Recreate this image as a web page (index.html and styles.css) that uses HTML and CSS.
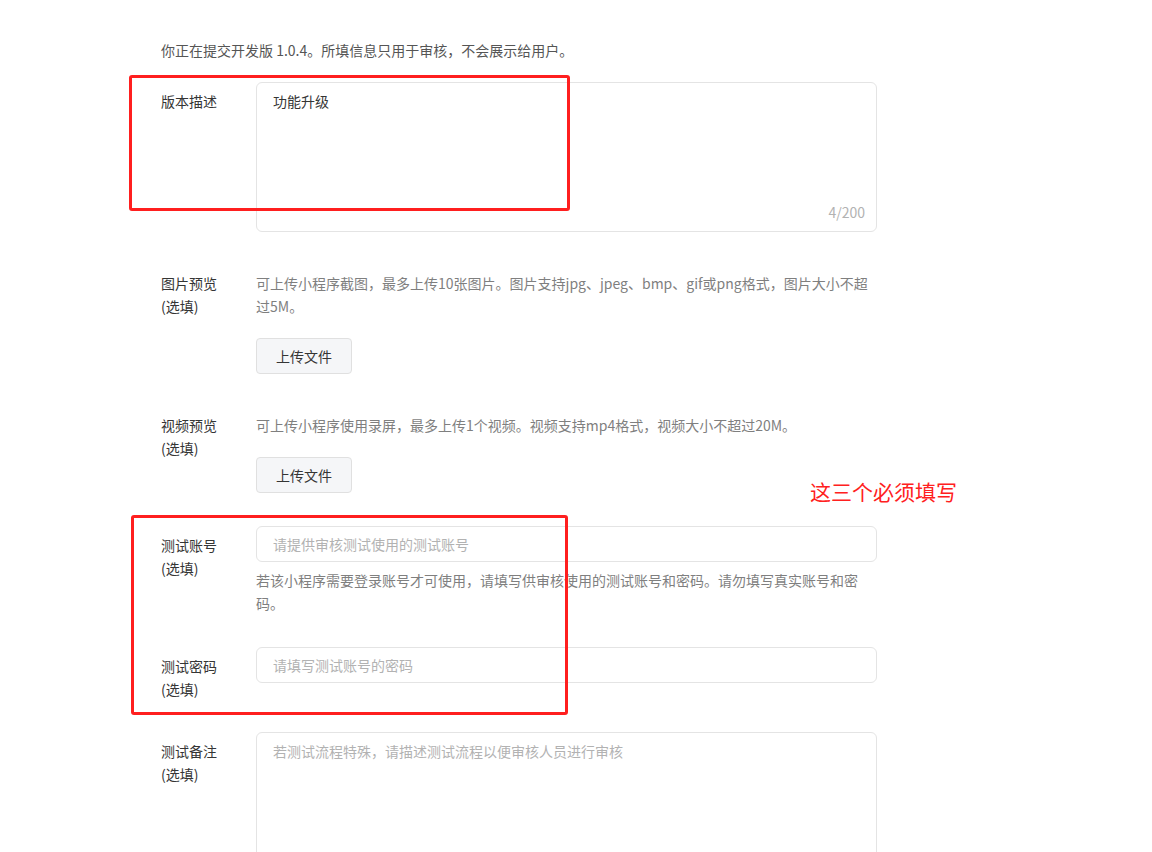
FILE: index.html
```html
<!DOCTYPE html>
<html lang="zh-CN">
<head>
    <meta charset="UTF-8">
    <meta name="viewport" content="width=device-width, initial-scale=1.0">
    <title>提交审核</title>
    <link rel="stylesheet" href="styles.css">
</head>
<body>
    <div id="page">
        <p class="intro">你正在提交开发版 1.0.4。所填信息只用于审核，不会展示给用户。</p>

        <div class="formRow first">
            <label class="formLabel">版本描述</label>
            <div class="formCtrl">
                <div class="areaWrap">
                    <textarea class="area">功能升级</textarea>
                    <span class="counter">4/200</span>
                </div>
            </div>
        </div>

        <div class="formRow">
            <label class="formLabel plain">图片预览<br>(选填)</label>
            <div class="formCtrl">
                <div class="desc">可上传小程序截图，最多上传10张图片。图片支持jpg、jpeg、bmp、gif或png格式，图片大小不超过5M。</div>
                <button class="uploadBtn">上传文件</button>
            </div>
        </div>

        <div class="formRow">
            <label class="formLabel plain">视频预览<br>(选填)</label>
            <div class="formCtrl">
                <div class="desc">可上传小程序使用录屏，最多上传1个视频。视频支持mp4格式，视频大小不超过20M。</div>
                <button class="uploadBtn">上传文件</button>
            </div>
        </div>

        <div class="formRow tight">
            <label class="formLabel">测试账号<br>(选填)</label>
            <div class="formCtrl">
                <input class="field" type="text" placeholder="请提供审核测试使用的测试账号">
                <div class="desc help">若该小程序需要登录账号才可使用，请填写供审核使用的测试账号和密码。请勿填写真实账号和密码。</div>
            </div>
        </div>

        <div class="formRow tight">
            <label class="formLabel">测试密码<br>(选填)</label>
            <div class="formCtrl">
                <input class="field" type="text" placeholder="请填写测试账号的密码">
            </div>
        </div>

        <div class="formRow last">
            <label class="formLabel">测试备注<br>(选填)</label>
            <div class="formCtrl">
                <textarea class="area" placeholder="若测试流程特殊，请描述测试流程以便审核人员进行审核"></textarea>
            </div>
        </div>

        <!-- annotations drawn over the form -->
        <div class="markBox boxOne"></div>
        <div class="markBox boxTwo"></div>
        <div class="markNote">这三个必须填写</div>
    </div>
</body>
</html>
```

FILE: styles.css
```css
html, body {
    margin: 0;
    height: 100%;
    overflow: hidden;
    background: #fff;
}
body {
    font-family: "Noto Sans CJK SC", "Noto Sans", sans-serif;
    font-size: 14px;
    color: #353535;
}
#page {
    position: relative;
    padding: 39px 0 0 161px;
}
.intro {
    margin: 0;
    line-height: 22px;
    color: #555;
}

/* form rows */
.formRow {
    display: flex;
    margin-top: 40px;
}
.formRow.first {
    margin-top: 21px;
}
.formRow.tight {
    margin-top: 33px;
}
.formRow.tight + .formRow.tight {
    margin-top: 32px;
}
.formRow.last {
    margin-top: 31px;
}
.formLabel {
    width: 95px;
    flex-shrink: 0;
    padding-top: 8px;
    line-height: 23px;
    color: #353535;
}
.formLabel.plain {
    padding-top: 0;
}
.formCtrl {
    width: 621px;
}
.desc {
    line-height: 23px;
    color: #7f7f7f;
}
.desc.help {
    margin-top: 7px;
}

/* controls */
.areaWrap {
    position: relative;
}
.area {
    display: block;
    box-sizing: border-box;
    width: 100%;
    height: 150px;
    margin: 0;
    padding: 7px 16px;
    border: 1px solid #e4e4e4;
    border-radius: 6px;
    font-family: inherit;
    font-size: 14px;
    line-height: 22px;
    color: #353535;
    resize: none;
    outline: none;
}
.area::placeholder,
.field::placeholder {
    color: #b2b2b2;
}
.counter {
    position: absolute;
    right: 12px;
    bottom: 9px;
    line-height: 22px;
    color: #b2b2b2;
}
.field {
    display: block;
    box-sizing: border-box;
    width: 100%;
    height: 36px;
    margin: 0;
    padding: 0 16px;
    border: 1px solid #e4e4e4;
    border-radius: 6px;
    font-family: inherit;
    font-size: 14px;
    color: #353535;
    outline: none;
}
.uploadBtn {
    display: block;
    width: 96px;
    height: 36px;
    margin-top: 20px;
    padding: 0;
    background: #f5f6f8;
    border: 1px solid #e0e0e0;
    border-radius: 4px;
    font-family: inherit;
    font-size: 14px;
    color: #353535;
    cursor: pointer;
}

/* red annotations */
.markBox {
    position: absolute;
    box-sizing: border-box;
    border: 3px solid #ff1f1f;
    border-radius: 3px;
}
.boxOne {
    left: 129px;
    top: 75px;
    width: 441px;
    height: 136px;
}
.boxTwo {
    left: 131px;
    top: 515px;
    width: 437px;
    height: 200px;
}
.markNote {
    position: absolute;
    left: 810px;
    top: 478px;
    font-size: 21px;
    line-height: 26px;
    color: #ff2020;
}
```
